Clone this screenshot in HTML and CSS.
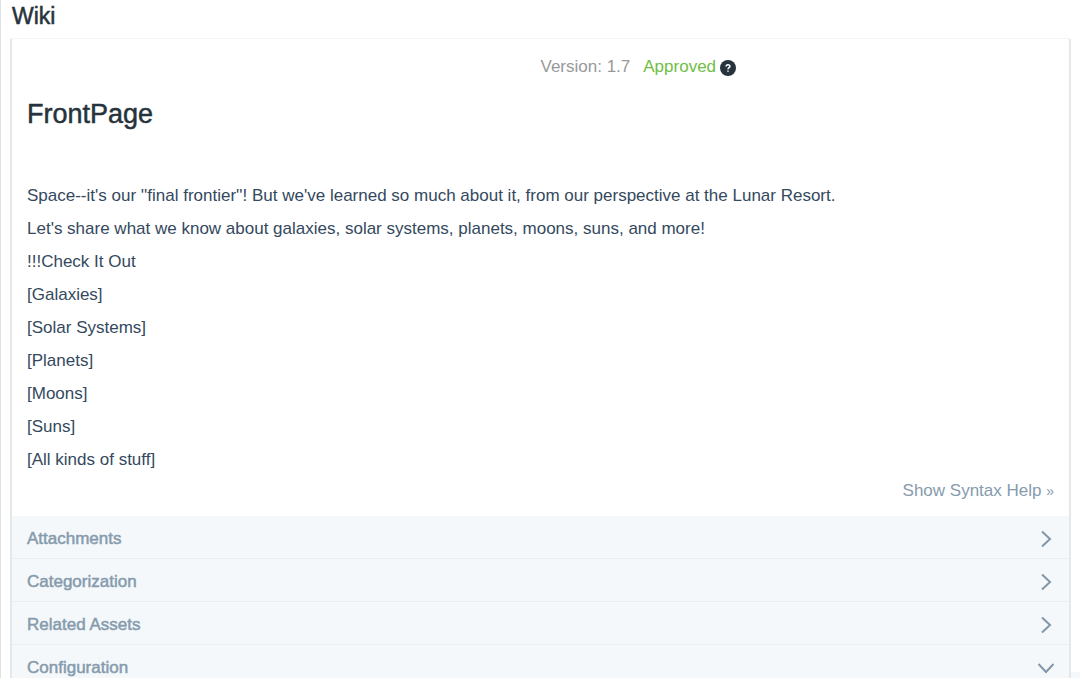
FILE: index.html
```html
<!DOCTYPE html>
<html lang="en">
<head>
<meta charset="utf-8">
<title>Wiki</title>
<link rel="stylesheet" href="styles.css">
</head>
<body>
<div class="shell">
  <main class="page">
    <h1 class="page-title">Wiki</h1>
    <section class="card">
      <div class="card-body">
        <div class="meta">
          <span class="version">Version: 1.7</span>
          <span class="status">Approved</span>
          <button class="help" type="button" aria-label="Status help">
            <svg viewBox="0 0 16 16" aria-hidden="true"><circle cx="8" cy="8" r="8" fill="#27333c"/><path d="M6.1 6.5C6.1 4.2 9.9 4.2 9.9 6.4C9.9 7.7 8 7.7 8 9.2M8 10.4V11.8" fill="none" stroke="#fff" stroke-width="1.5"/></svg>
          </button>
        </div>
        <h2 class="article-title">FrontPage</h2>
        <div class="article">
          <p>Space--it's our ''final frontier''! But we've learned so much about it, from our perspective at the Lunar Resort.</p>
          <p>Let's share what we know about galaxies, solar systems, planets, moons, suns, and more!</p>
          <p>!!!Check It Out</p>
          <p>[Galaxies]</p>
          <p>[Solar Systems]</p>
          <p>[Planets]</p>
          <p>[Moons]</p>
          <p>[Suns]</p>
          <p>[All kinds of stuff]</p>
        </div>
        <a class="syntax-link" href="#">Show Syntax Help <span class="arrows">»</span></a>
      </div>
      <div class="sections">
        <button class="section" type="button">Attachments<svg class="chevron" viewBox="0 0 18 18" aria-hidden="true"><path d="M5 1.5L13 9L5 16.5"/></svg></button>
        <button class="section" type="button">Categorization<svg class="chevron" viewBox="0 0 18 18" aria-hidden="true"><path d="M5 1.5L13 9L5 16.5"/></svg></button>
        <button class="section" type="button">Related Assets<svg class="chevron" viewBox="0 0 18 18" aria-hidden="true"><path d="M5 1.5L13 9L5 16.5"/></svg></button>
        <button class="section" type="button" aria-expanded="true">Configuration<svg class="chevron" viewBox="0 0 18 18" aria-hidden="true"><path d="M1.5 5L9 13L16.5 5"/></svg></button>
      </div>
    </section>
  </main>
  <div class="gutter"></div>
</div>
</body>
</html>
```
FILE: styles.css
```css
* {
  box-sizing: border-box;
}

body {
  margin: 0;
  background: #f4f8fb;
  color: #34495e;
  font: 17px/22px "Liberation Sans", Arial, sans-serif;
}

.shell {
  display: flex;
  height: 100vh;
  overflow: hidden;
}

.page {
  flex: 1;
  padding: 4px 0 0 9px;
  border-left: 1px solid #dfe1e3;
  background: #fff;
}

.gutter {
  width: 9px;
  margin-bottom: 6px;
  background: #fff;
}

.page-title,
.article-title {
  margin: 0;
  color: #27333c;
  font-weight: 400;
}

.page-title {
  padding-left: 2px;
  font-size: 23px;
  line-height: 24px;
  -webkit-text-stroke: 0.5px;
}

.card {
  margin-top: 10px;
  border: solid #e6e7e9;
  border-width: 1px 2px 0;
  border-top-color: #f5f5f5;
  border-radius: 3px 3px 0 0;
}

.card-body {
  display: flex;
  flex-direction: column;
  padding: 17px 15px 14px;
}

.meta {
  display: flex;
  align-items: center;
  margin-left: 50%;
}

.version {
  margin-right: 13px;
  color: #999;
}

.status {
  color: #6fbe44;
}

.help {
  width: 16px;
  height: 16px;
  margin: 2px 0 0 4px;
  padding: 0;
  border: 0;
  background: none;
}

.help svg {
  display: block;
}

.article-title {
  margin-top: 18px;
  font-size: 27px;
  line-height: 36px;
  -webkit-text-stroke: 0.5px;
}

.article {
  margin-top: 53px;
}

.article p {
  margin: 0 0 11px;
}

.article p:last-child {
  margin-bottom: 9px;
}

.syntax-link {
  align-self: flex-end;
  color: #869bad;
  text-decoration: none;
}

.arrows {
  font-size: 14px;
}

.section {
  display: flex;
  align-items: center;
  justify-content: space-between;
  width: 100%;
  height: 43px;
  padding: 3px 14px 0 15px;
  border: 0;
  border-bottom: 1px solid #e9eef2;
  background: #f4f8fb;
  color: #869bad;
  font: inherit;
  text-align: left;
  -webkit-text-stroke: 0.5px;
}

.chevron {
  width: 18px;
  height: 18px;
  fill: none;
  stroke: #8496a9;
  stroke-width: 2;
}
```
